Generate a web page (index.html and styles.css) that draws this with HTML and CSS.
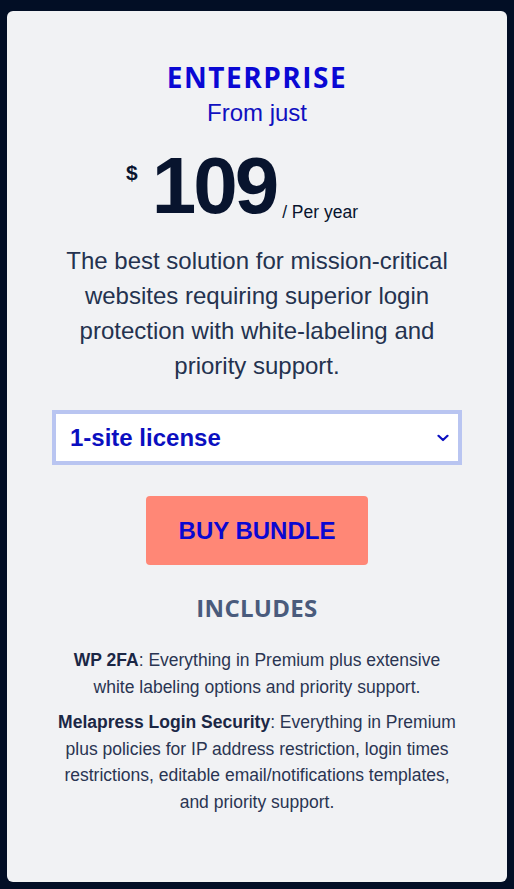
FILE: index.html
```html
<!DOCTYPE html>
<html lang="en">
<head>
<meta charset="utf-8">
<title>Enterprise plan</title>
<link rel="stylesheet" href="styles.css">
</head>
<body>
<div class="card">
  <h2 class="plan">ENTERPRISE</h2>
  <p class="from">From just</p>
  <div class="price">
    <span class="currency">$</span>
    <span class="amount">109</span>
    <span class="period">/ Per year</span>
  </div>
  <p class="desc">The best solution for mission-critical websites requiring superior login protection with white-labeling and priority support.</p>
  <div class="select">
    <span class="select-text">1-site license</span>
    <svg class="chev" width="12" height="8" viewBox="0 0 12 8"><path d="M1.5 1.8 L6 6 L10.5 1.8" fill="none" stroke="#0b0fc0" stroke-width="2.2" stroke-linecap="round" stroke-linejoin="round"/></svg>
  </div>
  <a class="buy" href="#">BUY BUNDLE</a>
  <h3 class="includes">INCLUDES</h3>
  <p class="item"><strong>WP 2FA</strong>: Everything in Premium plus extensive white labeling options and priority support.</p>
  <p class="item"><strong>Melapress Login Security</strong>: Everything in Premium plus policies for IP address restriction, login times restrictions, editable email/notifications templates, and priority support.</p>
</div>
</body>
</html>
```
FILE: styles.css
```css
html, body {
  margin: 0;
  padding: 0;
}
body {
  background: #020e25;
  font-family: "Liberation Sans", Arial, sans-serif;
  padding: 11px 7px 7px 7px;
  height: 889px;
  box-sizing: border-box;
}
.card {
  background: #f1f2f4;
  border-radius: 6px;
  height: 871px;
  box-sizing: border-box;
  padding: 48px 45px 0 45px;
  display: flex;
  flex-direction: column;
  align-items: center;
  text-align: center;
}
.plan {
  margin: 0;
  font-family: "Open Sans", sans-serif;
  font-weight: 700;
  font-size: 28px;
  line-height: 36px;
  letter-spacing: 1.5px;
  color: #0a08d4;
}
.from {
  margin: 3px 0 0 0;
  font-size: 24px;
  line-height: 30px;
  color: #1010c0;
}
.price {
  display: flex;
  align-items: flex-start;
  margin-top: 22px;
  padding-right: 30px;
  color: #08142e;
  height: 72px;
}
.currency {
  font-weight: 700;
  font-size: 21px;
  line-height: 24px;
  margin-top: 11px;
  margin-right: 14px;
}
.amount {
  font-weight: 700;
  font-size: 80px;
  line-height: 72px;
  letter-spacing: -3px;
}
.period {
  align-self: flex-end;
  font-size: 17.5px;
  line-height: 20px;
  margin-left: 6px;
}
.desc {
  margin: 21px 0 0 0;
  font-size: 24px;
  line-height: 35px;
  color: #24324f;
  width: 404px;
}
.select {
  margin-top: 27px;
  width: 410px;
  height: 55px;
  box-sizing: border-box;
  border: 4px solid #b9c5f1;
  background: #ffffff;
  display: flex;
  align-items: center;
  justify-content: space-between;
  padding: 0 9px 0 14px;
}
.select-text {
  font-weight: 700;
  font-size: 24px;
  color: #0b0fc0;
}
.chev {
  display: block;
}
.buy {
  margin-top: 31px;
  width: 222px;
  height: 69px;
  background: #ff8776;
  border-radius: 4px;
  display: flex;
  align-items: center;
  justify-content: center;
  font-weight: 700;
  font-size: 24px;
  color: #0b07d2;
  text-decoration: none;
}
.includes {
  margin: 28px 0 0 0;
  font-family: "Open Sans", sans-serif;
  font-weight: 700;
  font-size: 24px;
  line-height: 30px;
  letter-spacing: 0.3px;
  color: #4a5b7c;
}
.item {
  margin: 24px 0 0 0;
  font-size: 17.5px;
  line-height: 26.5px;
  color: #2a3552;
  width: 410px;
}
.item + .item {
  margin-top: 9px;
}
.item strong {
  color: #1b2745;
}
```
